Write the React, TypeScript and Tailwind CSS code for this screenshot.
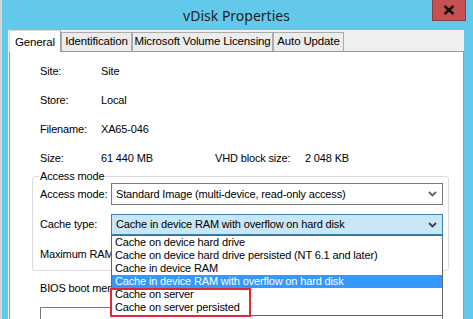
import React from 'react'

const listItems = [
  'Cache on device hard drive',
  'Cache on device hard drive persisted (NT 6.1 and later)',
  'Cache in device RAM',
  'Cache in device RAM with overflow on hard disk',
  'Cache on server',
  'Cache on server persisted',
]

function Chevron({ dark }: { dark?: boolean }) {
  return (
    <svg width="9" height="6" viewBox="0 0 9 6" className="shrink-0">
      <path d="M1 1 L4.5 4.5 L8 1" fill="none" stroke={dark ? '#404040' : '#606060'} strokeWidth="1.8" />
    </svg>
  )
}

function InfoRow({ label, value, children }: { label: string; value: string; children?: React.ReactNode }) {
  return (
    <div className="h-[29px] flex items-center pl-[30px]">
      <span className="w-[61px]">{label}</span>
      <span className={children ? 'w-[114px]' : ''}>{value}</span>
      {children}
    </div>
  )
}

export default function App() {
  return (
    <div className="w-[473px] h-[319px] bg-[#62c9eb] flex flex-col overflow-hidden relative border-l-2 border-[#d4d4d4] font-['Liberation_Sans',Arial,sans-serif] text-[11px] tracking-[-0.15px] text-black">
      {/* title bar */}
      <div className="h-[30px] shrink-0 flex items-center justify-center -ml-[2px] font-['Noto_Sans',sans-serif] text-[14px] tracking-normal text-[#222]">
        vDisk Properties
      </div>
      <div className="absolute top-0 right-[7px] w-[34px] h-[21px] bg-[#c75050] border border-t-0 border-[#8b3d3d] flex items-center justify-center">
        <svg width="12" height="10" viewBox="0 0 12 10">
          <path d="M1.5 1 L10.5 9 M10.5 1 L1.5 9" stroke="#111" strokeWidth="2.6" />
        </svg>
      </div>

      {/* client area */}
      <div className="ml-[6px] w-[456px] flex-1 bg-[#f0f0f0] flex flex-col">
        {/* tabs */}
        <div className="h-[21px] shrink-0 flex items-end pl-[1px] relative z-10 whitespace-nowrap">
          <div className="w-[52px] h-[22px] -mb-[1px] bg-white border border-b-0 border-l-[#d9d9d9] border-t-[#d9d9d9] border-r-[#9a9a9a] flex items-start justify-center pt-[3px] text-[11.5px]">
            General
          </div>
          <div className="w-[71px] h-[19px] bg-[#ececec] border border-b-0 border-[#acacac] flex items-center justify-center text-[11.5px]">
            Identification
          </div>
          <div className="w-[141px] h-[19px] bg-[#ececec] border border-b-0 border-[#acacac] flex items-center justify-center text-[11.5px]">
            Microsoft Volume Licensing
          </div>
          <div className="w-[71px] h-[19px] bg-[#ececec] border border-b-0 border-[#acacac] flex items-center justify-center text-[11.5px]">
            Auto Update
          </div>
        </div>

        {/* tab page */}
        <div className="flex-1 bg-white border border-b-0 border-[#9a9a9a] ml-[1px] flex flex-col pt-[5px]">
          <InfoRow label="Site:" value="Site" />
          <InfoRow label="Store:" value="Local" />
          <InfoRow label="Filename:" value="XA65-046" />
          <InfoRow label="Size:" value="61 440 MB">
            <span className="w-[90px]">VHD block size:</span>
            <span>2 048 KB</span>
          </InfoRow>

          {/* group box */}
          <div className="mt-[3px] ml-[22px] w-[417px] h-[95px] shrink-0 border border-[#dcdcdc] rounded-[3px] relative pl-[7px] pt-[6px] flex flex-col">
            <span className="absolute -top-[8px] left-[6px] bg-white px-[1px] leading-[14px]">Access mode</span>

            <div className="flex items-center h-[22px]">
              <span className="w-[71px]">Access mode:</span>
              <div className="w-[332px] h-[22px] border border-[#7a7a7a] bg-white flex items-center justify-between pl-[4px] pr-[5px]">
                <span>Standard Image (multi-device, read-only access)</span>
                <Chevron />
              </div>
            </div>

            <div className="flex items-center h-[21px] mt-[9px]">
              <span className="w-[71px]">Cache type:</span>
              <div className="relative w-[332px] h-[21px]">
                <div className="w-full h-full border border-[#3c7fb1] bg-[#c9e6f7] flex items-center justify-between pl-[4px] pr-[5px]">
                  <span>Cache in device RAM with overflow on hard disk</span>
                  <Chevron dark />
                </div>

                {/* open dropdown list */}
                <div className="absolute top-full left-0 w-[332px] bg-white border border-[#646464] z-20 flex flex-col">
                  {listItems.map((item, i) => (
                    <div
                      key={item}
                      className={
                        i === 3
                          ? 'h-[13px] leading-[13px] pl-[3px] bg-[#3399ff] text-white'
                          : 'h-[13px] leading-[13px] pl-[3px]'
                      }
                    >
                      {item}
                    </div>
                  ))}
                  <div className="h-[1px]" />
                  <div className="absolute left-[-2px] top-[52px] w-[141px] h-[29px] border-2 border-[#e3262f]" />
                </div>
              </div>
            </div>

            <div className="flex items-center h-[21px] mt-[9px]">
              <span>Maximum RAM size (MBs):</span>
            </div>
          </div>

          <div className="mt-[10px] pl-[30px] h-[14px] leading-[14px]">BIOS boot menu text (optional):</div>
          <div className="mt-[12px] ml-[30px] w-[403px] h-[20px] shrink-0 border border-[#7a7a7a] bg-white" />
        </div>
      </div>
    </div>
  )
}
